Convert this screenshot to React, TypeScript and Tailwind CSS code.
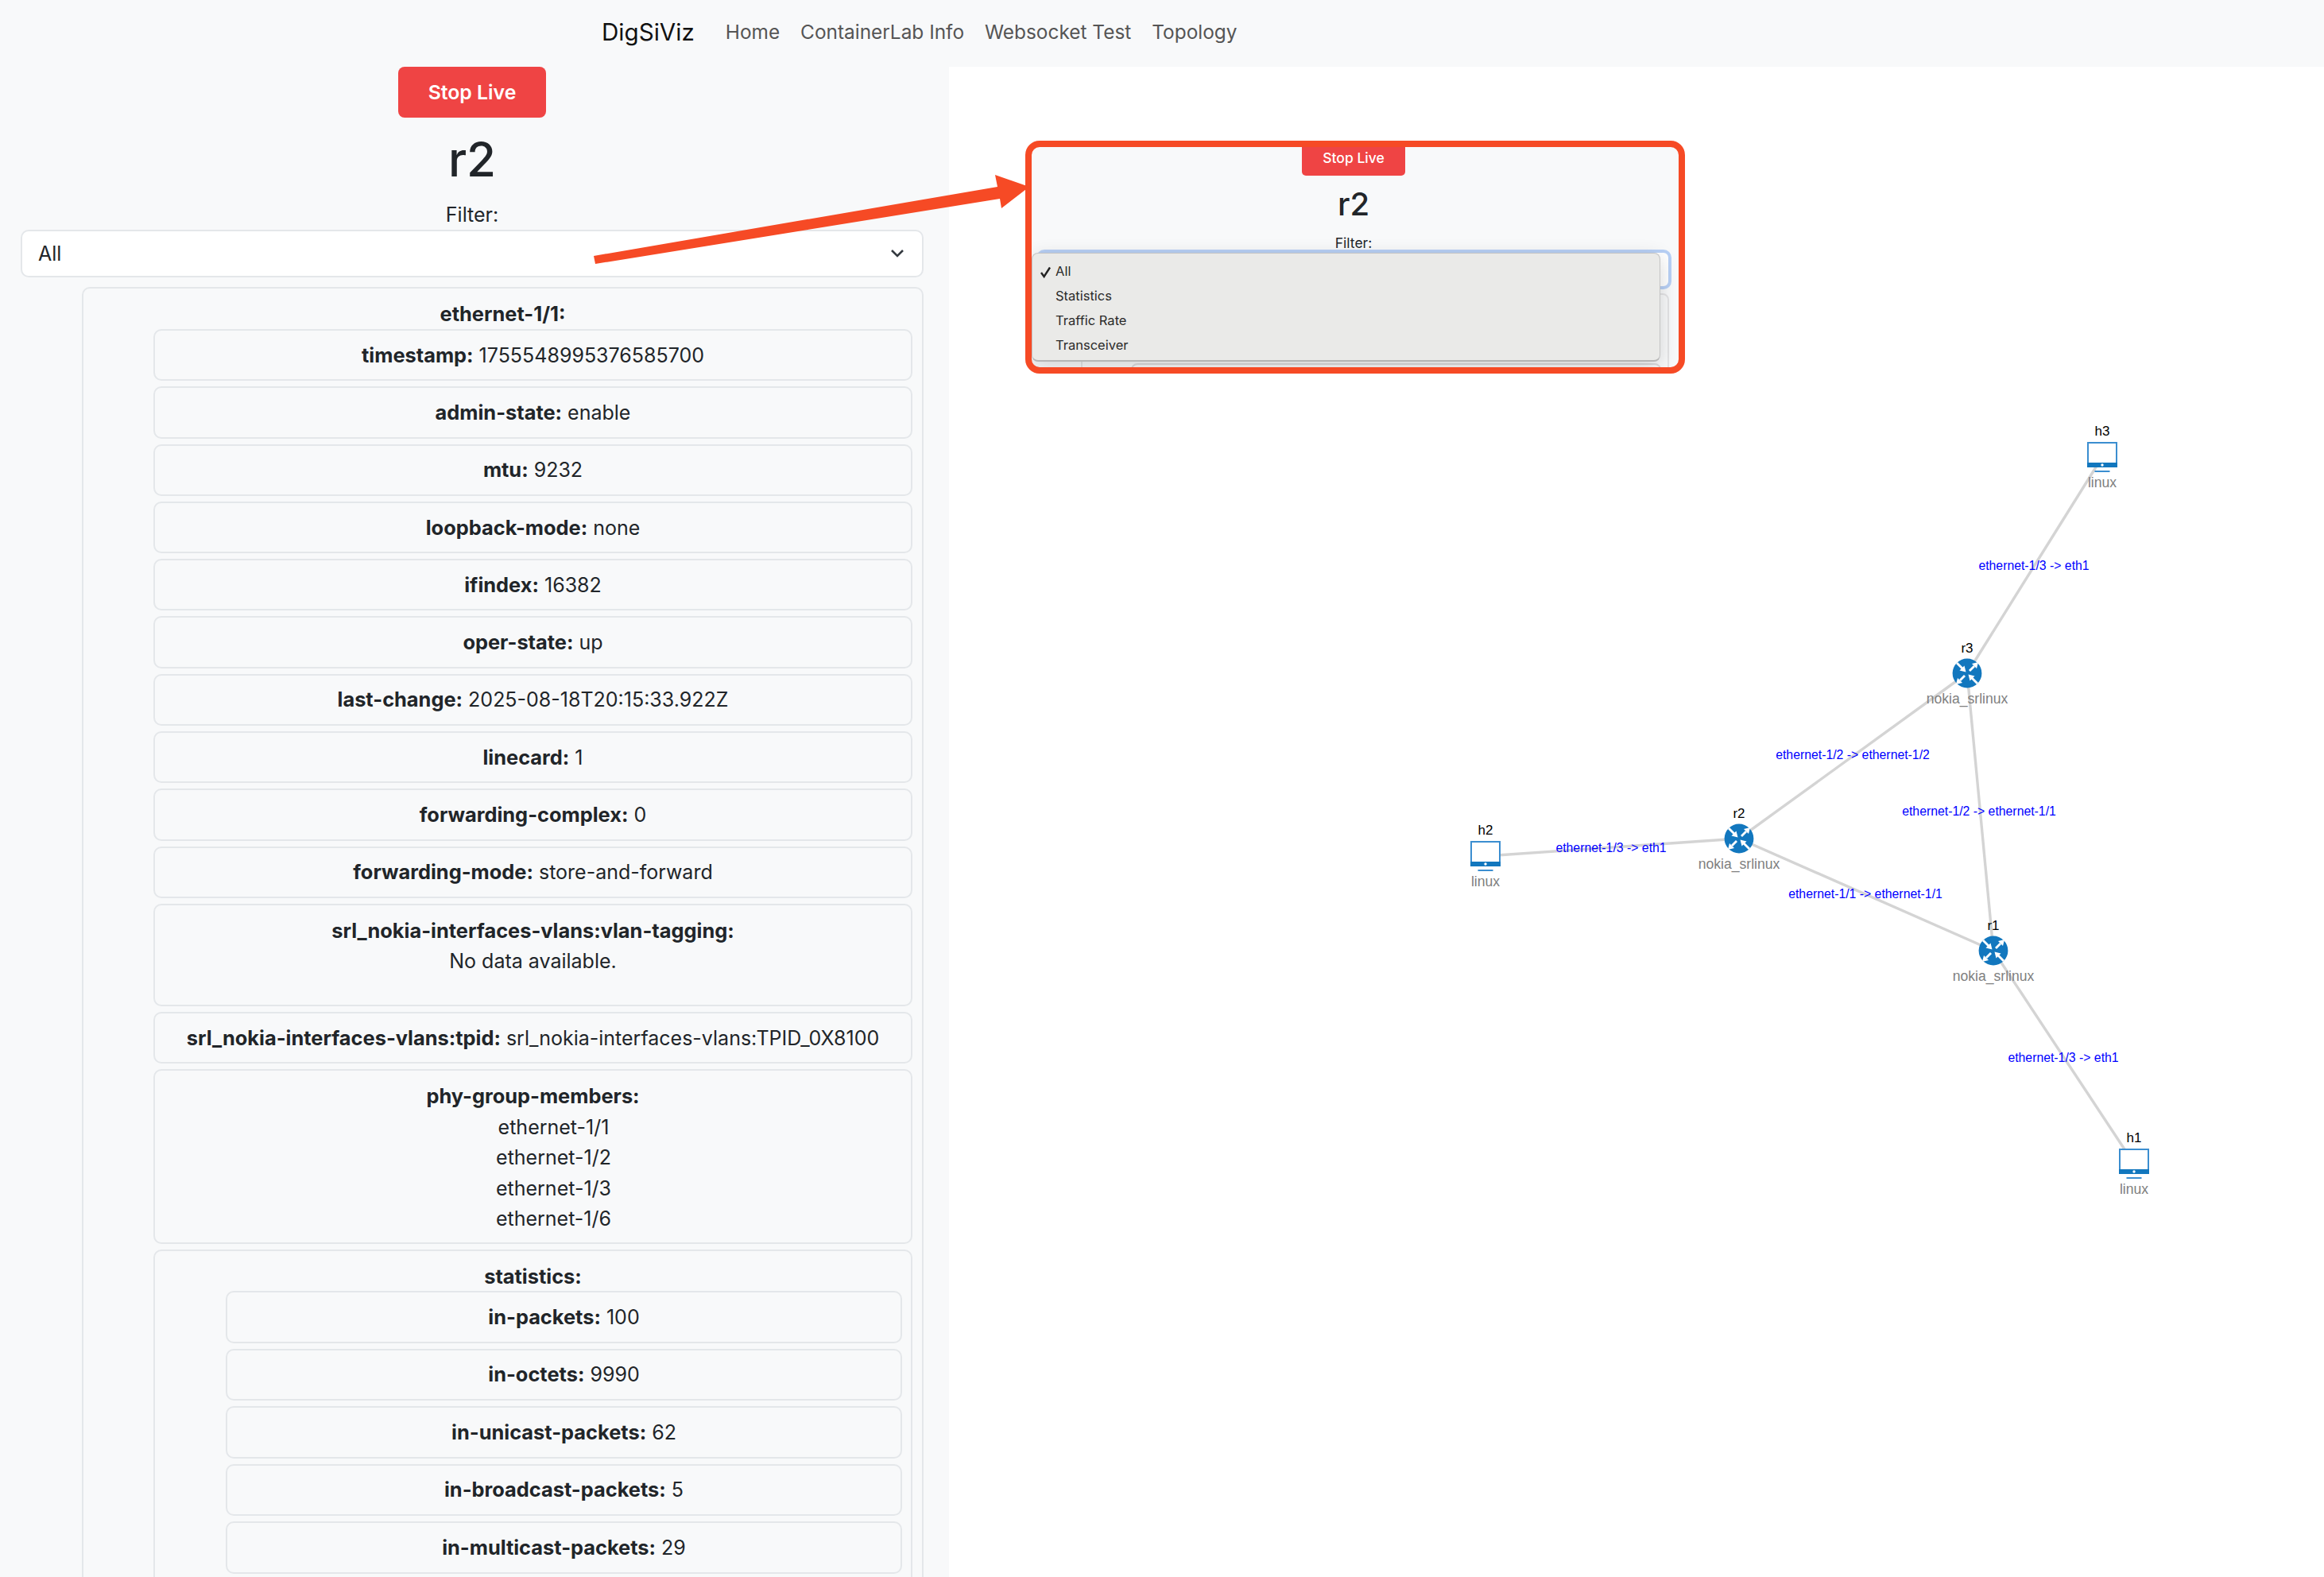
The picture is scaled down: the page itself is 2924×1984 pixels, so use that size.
const font = "font-['Inter','Liberation_Sans',sans-serif]";

function Row({ k, v }: { k: string; v: string }) {
  return (
    <div className="h-[65.3px] flex items-center justify-center border-2 border-[#e4e7ea] rounded-[10px]">
      <span><b className="font-bold text-[25.4px]">{k}:</b> {v}</span>
    </div>
  );
}

function Router({ x, y, name }: { x: number; y: number; name: string }) {
  return (
    <g>
      <circle cx={x} cy={y} r={18.4} fill="#1277be" />
      <g stroke="#fff" strokeWidth={2.8} fill="#fff">
        <line x1={x - 13} y1={y - 13} x2={x - 5} y2={y - 5} />
        <polygon points={`${x - 1.5},${y - 1.5} ${x - 9.5},${y - 3.5} ${x - 3.5},${y - 9.5}`} strokeWidth={0} />
        <line x1={x + 3} y1={y - 3} x2={x + 9} y2={y - 9} />
        <polygon points={`${x + 14},${y - 14} ${x + 6},${y - 12} ${x + 12},${y - 6}`} strokeWidth={0} />
        <line x1={x - 3} y1={y + 3} x2={x - 9} y2={y + 9} />
        <polygon points={`${x - 14},${y + 14} ${x - 6},${y + 12} ${x - 12},${y + 6}`} strokeWidth={0} />
        <line x1={x + 13} y1={y + 13} x2={x + 5} y2={y + 5} />
        <polygon points={`${x + 1.5},${y + 1.5} ${x + 9.5},${y + 3.5} ${x + 3.5},${y + 9.5}`} strokeWidth={0} />
      </g>
      <text x={x} y={y - 26} textAnchor="middle" fontSize={17} fill="#000">{name}</text>
      <text x={x} y={y + 38} textAnchor="middle" fontSize={17.6} fill="#808080">nokia_srlinux</text>
    </g>
  );
}

function Host({ x, y, name }: { x: number; y: number; name: string }) {
  return (
    <g>
      <rect x={x - 18} y={y - 18} width={36} height={30} fill="#fff" stroke="#3b8ed0" strokeWidth={2} />
      <rect x={x - 19} y={y + 7} width={38} height={6} fill="#1277be" />
      <circle cx={x} cy={y + 10} r={1.7} fill="#fff" />
      <rect x={x - 9.5} y={y + 17} width={19} height={2} fill="#3b8ed0" />
      <text x={x} y={y - 27} textAnchor="middle" fontSize={17} fill="#000">{name}</text>
      <text x={x} y={y + 38} textAnchor="middle" fontSize={17.6} fill="#808080">linux</text>
    </g>
  );
}

const edges = [
  [2645, 575, 2475, 847],
  [2475, 847, 2188, 1055],
  [2475, 847, 2508, 1196],
  [1869, 1077, 2188, 1055],
  [2188, 1055, 2508, 1196],
  [2508, 1196, 2685, 1464],
];

const labels: [number, number, string][] = [
  [2559, 711, "ethernet-1/3 -> eth1"],
  [2331, 949.5, "ethernet-1/2 -> ethernet-1/2"],
  [2490, 1020.5, "ethernet-1/2 -> ethernet-1/1"],
  [2027, 1066, "ethernet-1/3 -> eth1"],
  [2347, 1124.5, "ethernet-1/1 -> ethernet-1/1"],
  [2596, 1330, "ethernet-1/3 -> eth1"],
];

export default function App() {
  return (
    <div className={`relative w-[2924px] h-[1984px] overflow-hidden bg-[#f8f9fa] text-[#212529] text-[25px] leading-[38px] ${font}`}>
      <nav className="h-[84px] flex items-center pl-[757px] text-[24.4px] -translate-y-[2px]">
        <span className="text-[29.6px] text-[#111] mr-[39px]">DigSiViz</span>
        <div className="flex gap-[26px] text-[#555]">
          <span>Home</span>
          <span>ContainerLab Info</span>
          <span>Websocket Test</span>
          <span>Topology</span>
        </div>
      </nav>
      <div className="flex h-[1900px]">
        <div className="w-[1194px] overflow-hidden text-center pl-[26px] pr-[32px] shrink-0">
          <button className="mx-auto block w-[186px] h-[64px] rounded-[8px] bg-[#ef4444] text-white font-semibold text-[24.8px]">Stop Live</button>
          <h1 className="text-[60px] leading-[76px] font-medium mt-[14px]">r2</h1>
          <div className="mt-[13px] leading-[38px]">Filter:</div>
          <div className="h-[60px] flex items-center justify-between pl-[20px] pr-[22px] bg-white border-2 border-[#e4e7ea] rounded-[10px]">
            <span>All</span>
            <svg width="18" height="12" viewBox="0 0 18 12" fill="none" stroke="#343a40" strokeWidth="2.6"><path d="M2 2l7 7 7-7" /></svg>
          </div>
          <div className="mt-[12px] ml-[77px] border-2 border-[#e4e7ea] rounded-[10px] pr-[12px] pt-[14px] pl-[88px]">
            <div className="font-bold text-[25.4px] -ml-[88px] -mr-[12px] leading-[36px] h-[37px]">ethernet-1/1:</div>
            <div className="flex flex-col gap-[7px]">
              <Row k="timestamp" v="1755548995376585700" />
              <Row k="admin-state" v="enable" />
              <Row k="mtu" v="9232" />
              <Row k="loopback-mode" v="none" />
              <Row k="ifindex" v="16382" />
              <Row k="oper-state" v="up" />
              <Row k="last-change" v="2025-08-18T20:15:33.922Z" />
              <Row k="linecard" v="1" />
              <Row k="forwarding-complex" v="0" />
              <Row k="forwarding-mode" v="store-and-forward" />
              <div className="h-[129px] border-2 border-[#e4e7ea] rounded-[10px] pt-[13px]">
                <div className="font-bold text-[25.4px]">srl_nokia-interfaces-vlans:vlan-tagging:</div>
                <div>No data available.</div>
              </div>
              <Row k="srl_nokia-interfaces-vlans:tpid" v="srl_nokia-interfaces-vlans:TPID_0X8100" />
              <div className="h-[220px] border-2 border-[#e4e7ea] rounded-[10px] pt-[13px] leading-[38.5px]">
                <div className="font-bold text-[25.4px]">phy-group-members:</div>
                <div className="pl-[52px]">ethernet-1/1</div>
                <div className="pl-[52px]">ethernet-1/2</div>
                <div className="pl-[52px]">ethernet-1/3</div>
                <div className="pl-[52px]">ethernet-1/6</div>
              </div>
              <div className="border-2 border-[#e4e7ea] rounded-[10px] pt-[13px] pr-[11px] pl-[89px] pb-[20px]">
                <div className="font-bold text-[25.4px] -ml-[89px] -mr-[11px] h-[37px]">statistics:</div>
                <div className="flex flex-col gap-[7.2px]">
                  <Row k="in-packets" v="100" />
                  <Row k="in-octets" v="9990" />
                  <Row k="in-unicast-packets" v="62" />
                  <Row k="in-broadcast-packets" v="5" />
                  <Row k="in-multicast-packets" v="29" />
                </div>
              </div>
            </div>
          </div>
        </div>
        <div className="flex-1 bg-white">
          <svg className="w-full h-full font-['Liberation_Sans',sans-serif]" viewBox="1194 84 1730 1900">
            {edges.map(([a, b, c, d], i) => (
              <line key={i} x1={a} y1={b} x2={c} y2={d} stroke="#d4d4d4" strokeWidth={3.4} />
            ))}
            <Host x={2645} y={575} name="h3" />
            <Host x={1869} y={1077} name="h2" />
            <Host x={2685} y={1464} name="h1" />
            <Router x={2475} y={847} name="r3" />
            <Router x={2188} y={1055} name="r2" />
            <Router x={2508} y={1196} name="r1" />
            {labels.map(([x, y, t], i) => (
              <text key={i} x={x} y={y + 5.5} textAnchor="middle" fontSize={15.8} fill="#0000ff">{t}</text>
            ))}
          </svg>
        </div>
      </div>

      <div className="absolute left-[1290px] top-[177px] w-[830px] h-[293px] border-[8px] border-[#f64a25] rounded-[18px] bg-[#f8f9fa] overflow-hidden text-center">
        <div className="pr-[4px]">
          <button className="mx-auto block w-[130px] h-[36px] rounded-b-[5px] bg-[#ef4444] text-white text-[17.5px] leading-[28px] pb-[8px] font-medium">Stop Live</button>
          <div className="text-[40px] leading-[50px] font-medium mt-[11px]">r2</div>
          <div className="text-[17.5px] leading-[20px] mt-[14px]">Filter:</div>
        </div>
        <div className="absolute left-[6px] top-[129px] right-[9px] h-[50px] bg-white border-[4px] border-[#b8d0f5] rounded-[10px]" />
        <div className="absolute left-[62px] top-[184px] right-[12px] h-[120px] border-2 border-[#e4e4e6] rounded-[8px]" />
        <div className="absolute left-[125px] top-[272px] right-[22px] h-[40px] border-2 border-[#dcdcde] rounded-[8px]" />
        <div className="absolute left-0 top-[133px] w-[791px] h-[137px] bg-[#eaeae8] border border-[#c4c4c4] border-b-2 border-b-[#b5b5b5] rounded-[8px] text-left pl-[29px] text-[16.5px] leading-[31px] pt-[7px] text-[#2a2a2a] shadow-[0_6px_24px_rgba(0,0,0,0.16)]">
          <div className="relative">
            <svg className="absolute -left-[20px] top-[9px]" width="15" height="15" viewBox="0 0 15 15" fill="none" stroke="#222" strokeWidth="2.4"><path d="M2 8l3.6 5L13 1.5" /></svg>
            All
          </div>
          <div>Statistics</div>
          <div>Traffic Rate</div>
          <div>Transceiver</div>
        </div>
      </div>

      <svg className="absolute left-0 top-0 pointer-events-none" width="2924" height="1984">
        <polygon points="747,322 1255,235 1252,220 1295,235 1260,262 1258,250 749,332" fill="#f64a25" />
      </svg>
    </div>
  );
}
